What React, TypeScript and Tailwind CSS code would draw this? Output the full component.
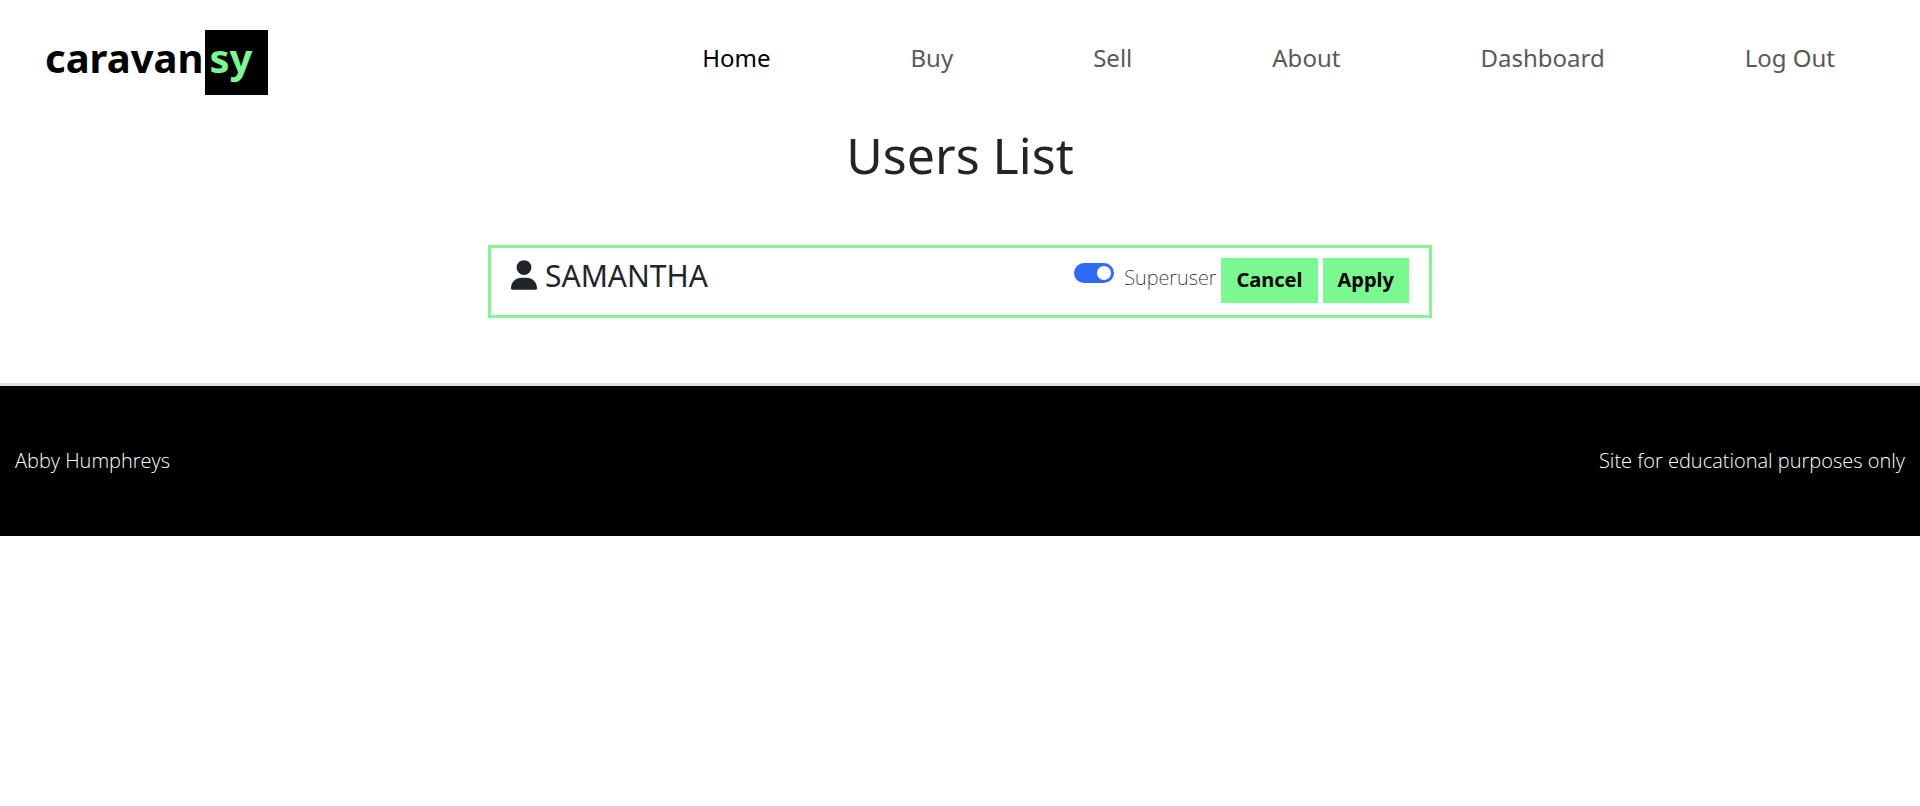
import { useState } from "react";
import { FaUser } from "react-icons/fa6";

const links = ["Home", "Buy", "Sell", "About", "Dashboard", "Log Out"];

function Header() {
  return (
    <header className="flex items-start justify-between pt-[30px] pr-[85px] pl-[45px]">
      <a href="#home" className="flex text-[40px] leading-[56px] font-bold text-black">
        <span>caravan</span>
        <span className="ml-0.5 bg-black pr-4 pb-[9px] pl-1 text-[#79f98f]">sy</span>
      </a>
      <nav className="flex gap-[140px] pt-2.5">
        {links.map((label, i) => (
          <a
            key={label}
            href={"#" + label.toLowerCase().replace(" ", "-")}
            className={"text-2xl leading-9 " + (i === 0 ? "text-black" : "text-[#595959]")}
          >
            {label}
          </a>
        ))}
      </nav>
    </header>
  );
}

function UserRow({ name }: { name: string }) {
  const [superuser, setSuperuser] = useState(true);
  return (
    <section className="flex items-start justify-between border-3 border-[#86f399] px-5 pt-2.5 pb-3">
      <h2 className="flex items-start gap-2 text-3xl leading-9">
        <FaUser className="mt-0.5 h-[30px] w-[26px]" />
        {name}
      </h2>
      <form className="flex" onSubmit={(e) => e.preventDefault()}>
        <label className="mr-[5px] flex items-start text-xl leading-[40px] font-extralight">
          <input
            type="checkbox"
            role="switch"
            checked={superuser}
            onChange={(e) => setSuperuser(e.target.checked)}
            className="mt-[5px] mr-2.5 flex h-5 w-10 appearance-none items-center rounded-full bg-gray-400 px-[3px] before:size-3.5 before:rounded-full before:bg-white checked:justify-end checked:bg-[#2f6bf6]"
          />
          Superuser
        </label>
        <button type="button" className="mr-[5px] h-[45px] bg-[#79f98f] px-[15px] pb-0.5 text-xl font-bold text-black">
          Cancel
        </button>
        <button type="submit" className="h-[45px] bg-[#79f98f] px-[15px] pb-0.5 text-xl font-bold text-black">
          Apply
        </button>
      </form>
    </section>
  );
}

export default function App() {
  return (
    <div className="bg-white font-['Noto_Sans','Open_Sans',sans-serif] text-[#212529]">
      <Header />
      <main className="pb-[65px]">
        <h1 className="pt-[30px] text-center text-[50px] leading-[60px]">Users List</h1>
        <div className="mx-auto mt-[60px] w-1/2 px-2">
          <UserRow name="SAMANTHA" />
        </div>
      </main>
      <footer className="flex items-center justify-between border-t-3 border-[#dee0e1] bg-black px-[15px] py-[60px] font-['Open_Sans','Noto_Sans',sans-serif] text-xl leading-[30px] font-light text-white">
        <p>Abby Humphreys</p>
        <p>Site for educational purposes only</p>
      </footer>
    </div>
  );
}
